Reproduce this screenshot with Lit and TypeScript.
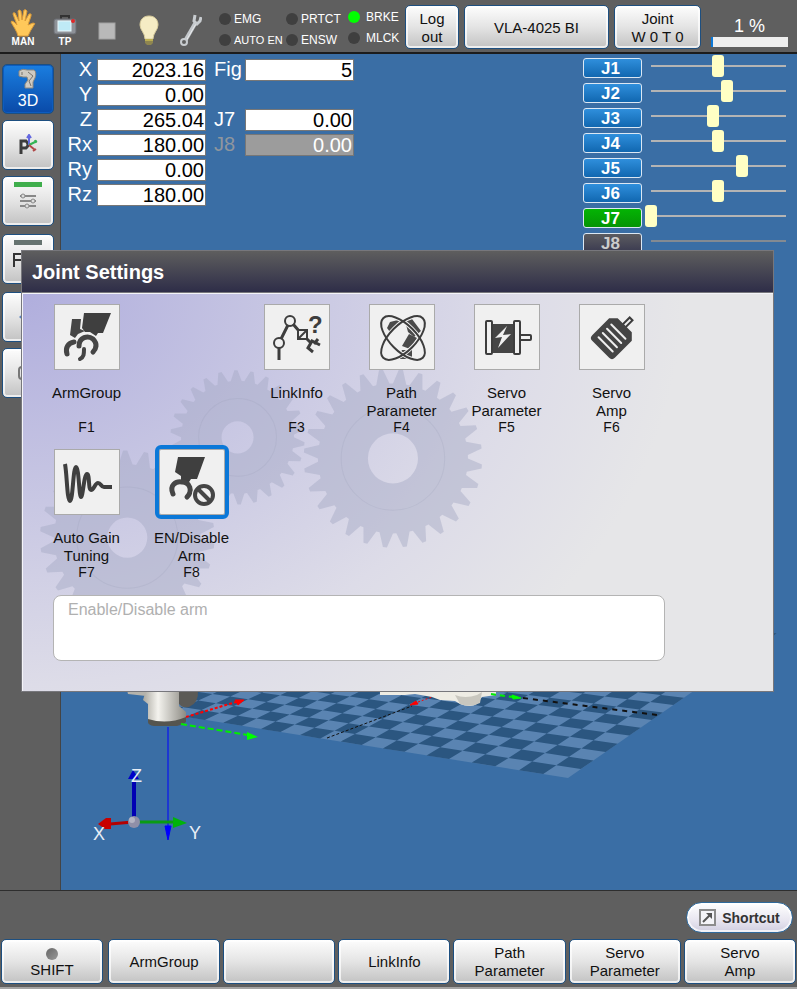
import { LitElement, html, css, svg, nothing } from "lit";
import { customElement, property } from "lit/decorators.js";
import { classMap } from "lit/directives/class-map.js";

const face = css`
  button {
    font: 15px/18px "Liberation Sans", Arial, sans-serif;
    color: #111;
    padding: 0;
    border: 1px solid #1d4f80;
    border-radius: 5px;
    background: linear-gradient(#fdfdfd, #e4e4e4 50%, #c2c2c2);
    box-shadow: inset 0 0 0 2px rgba(255, 255, 255, 0.7);
  }
`;

/* Icons of the function tiles, each on a 66 x 66 canvas */
const icons: Record<string, unknown> = {
  armGroup: svg`
    <path d="M18 15H27L26 25L31 27L24 30L21 34L16 31Z" fill="#454545"/>
    <path d="M30 9H57L49 29H44L42 32L36 28H31L28 24Z" fill="#3f3f3f"/>
    <path d="M13 50C11 44 14 39 20 38" fill="none" stroke="#454545" stroke-width="5" stroke-linecap="round"/>
    <path d="M25 42C25 33 34 31 39 35C44 40 42 45 39 48" fill="none" stroke="#454545" stroke-width="5" stroke-linecap="round"/>
    <path d="M26 55C30 53 30 50 30 45" fill="none" stroke="#454545" stroke-width="4" stroke-linecap="round"/>`,
  linkInfo: svg`
    <g fill="none" stroke="#3d3d3d" stroke-width="3">
      <path d="M15 44V56M17 35L24 21M29 20L35 27M43 35L47 39"/>
      <circle cx="15" cy="39" r="5" stroke-width="2"/>
      <circle cx="26" cy="17" r="5" stroke-width="2"/>
      <rect x="34" y="26" width="9" height="9" stroke-width="2"/>
      <path d="M34 35L43 26" stroke-width="2"/>
      <path d="M49 48L44 44L48 37L56 41M50 40L54 35"/>
    </g>
    <text x="44" y="29" font-size="24" font-weight="700" fill="#3d3d3d">?</text>`,
  path: svg`
    <path d="M21 18L33 15L35 18L23 25L21 28L18 24Z" fill="#4a4a4a"/>
    <path d="M36 17L43 15L52 27L45 33L39 28Z" fill="#4a4a4a"/>
    <path d="M40 30L48 34L41 45L33 42Z" fill="#4a4a4a"/>
    <path d="M33 46H43V55H31V50Z" fill="#4a4a4a"/>
    <g fill="none" stroke="#f0f0f0" stroke-width="4">
      <ellipse cx="34" cy="34" rx="28" ry="13" transform="rotate(45 34 34)"/>
      <ellipse cx="34" cy="34" rx="28" ry="13" transform="rotate(-45 34 34)"/>
    </g>
    <g fill="none" stroke="#3d3d3d" stroke-width="2">
      <ellipse cx="34" cy="34" rx="28" ry="13" transform="rotate(45 34 34)"/>
      <ellipse cx="34" cy="34" rx="28" ry="13" transform="rotate(-45 34 34)"/>
    </g>`,
  servo: svg`
    <rect x="18" y="20" width="22" height="29" fill="#454545"/>
    <g fill="#f0f0f0" stroke="#3d3d3d" stroke-width="2">
      <rect x="12" y="17" width="6" height="33" rx="1"/>
      <rect x="40" y="17" width="6" height="33" rx="1"/>
      <rect x="46" y="31" width="11" height="5" rx="1"/>
    </g>
    <path d="M33 22L21 34L28 33L24 44L37 30L29 31Z" fill="#f0f0f0"/>`,
  amp: svg`
    <g transform="rotate(45 33 34)">
      <rect x="31" y="7" width="4" height="10" fill="#f0f0f0" stroke="#3d3d3d" stroke-width="2"/>
      <path d="M23 16H43L49 22V46Q49 50 45 50H21Q17 50 17 46V22Z" fill="#454545"/>
      <path d="M23 25H43M23 31H43M23 37H43M23 43H43" stroke="#f0f0f0" stroke-width="2" stroke-linecap="round"/>
    </g>`,
  gain: svg`
    <path d="M11 15C13 25 13 52 16 52S19 18 22 18S25 48 27 48S30 25 33 25S34 41 37 41S41 34 44 34S47 38 50 38H58"
      fill="none" stroke="#3f3f3f" stroke-width="4" stroke-linejoin="round"/>`,
  disable: svg`
    <path d="M19 8H46L38 30H32L30 33H22V27L16 23Z" fill="#3f3f3f"/>
    <path d="M14 45C10 36 17 32 23 33C31 33 34 42 28 48" fill="none" stroke="#454545" stroke-width="5" stroke-linecap="round"/>
    <circle cx="45" cy="46" r="12" fill="#f0f0f0"/>
    <circle cx="45" cy="46" r="9" fill="none" stroke="#454545" stroke-width="4"/>
    <path d="M39 40L51 52" stroke="#454545" stroke-width="4"/>`,
};

@customElement("function-tile")
export class FunctionTile extends LitElement {
  @property() icon = "";
  @property() label = "";
  @property() key = "";
  @property({ type: Boolean }) selected = false;

  static styles = css`
    :host {
      display: block;
    }
    .tile {
      width: 100%;
      padding: 0;
      border: 0;
      background: none;
      color: #111;
      font: 15px/18px "Liberation Sans", Arial, sans-serif;
      display: flex;
      flex-direction: column;
      align-items: center;
    }
    .icon {
      box-sizing: border-box;
      width: 66px;
      height: 66px;
      border: 1px solid #aaa;
      background: #f0f0f0;
      margin-bottom: 14px;
    }
    .icon svg {
      display: block;
      width: 64px;
      height: 64px;
      font-family: "Liberation Sans", Arial, sans-serif;
    }
    .selected .icon {
      outline: 4px solid #0b78d8;
      border-radius: 2px;
    }
    .label {
      height: 36px;
      white-space: pre-line;
    }
    .key {
      font-size: 14px;
      line-height: 14px;
    }
  `;

  render() {
    return html`<button class=${classMap({ tile: true, selected: this.selected })}>
      <span class="icon"><svg viewBox="1 1 64 64" aria-hidden="true">${icons[this.icon]}</svg></span>
      <span class="label">${this.label}</span>
      <span class="key">${this.key}</span>
    </button>`;
  }
}

function gear(cx: number, cy: number, outer: number, hub: number, teeth: number) {
  const inner = outer * 0.84;
  const pts: string[] = [];
  for (let i = 0; i < teeth; i++) {
    const steps: [number, number][] = [[0, inner], [0.3, outer], [0.5, outer], [0.8, inner]];
    for (const [f, r] of steps) {
      const a = ((i + f) / teeth) * Math.PI * 2;
      pts.push(`${(cx + r * Math.cos(a)).toFixed(1)} ${(cy + r * Math.sin(a)).toFixed(1)}`);
    }
  }
  const hole = `M${cx - hub} ${cy}a${hub} ${hub} 0 1 0 ${hub * 2} 0a${hub} ${hub} 0 1 0 ${-hub * 2} 0Z`;
  return svg`<path d="M${pts.join("L")}Z${hole}" fill-rule="evenodd" class="gear"/>
    <circle cx=${cx} cy=${cy} r=${outer * 0.58} class="ring"/>`;
}

@customElement("joint-dialog")
export class JointDialog extends LitElement {
  static styles = css`
    :host {
      display: block;
      box-sizing: border-box;
      border: 1px solid #77777c;
      background: #e6e6e8;
      font-family: "Liberation Sans", Arial, sans-serif;
    }
    .title {
      margin: 0;
      padding: 1px 10px 0;
      font-size: 20px;
      line-height: 40px;
      color: #fff;
      background: linear-gradient(#5e5e5e, #2e2d48);
      border-bottom: 1px solid #77777c;
    }
    .body {
      position: relative;
      padding: 10px 11px 30px;
      border: 1px solid #f4f4f8;
      border-width: 1px 0 0 1px;
      background: radial-gradient(ellipse 660px 520px at 0 0, #b0aedd, #c8c7e3 40%, #dddce8 75%, #e6e6e8);
    }
    .backdrop {
      position: absolute;
      inset: 0;
      width: 100%;
      height: 100%;
    }
    .gear {
      fill: #a4a9c4;
      opacity: 0.45;
    }
    .ring {
      fill: none;
      stroke: #9499b4;
      stroke-width: 1;
      opacity: 0.2;
    }
    .tiles {
      position: relative;
      display: grid;
      grid-template-columns: repeat(6, 105px);
      gap: 15px 0;
    }
    .f1 { grid-column: 1; }
    .f3 { grid-column: 3; }
    .f7 { grid-column: 1; }
    .help {
      position: relative;
      box-sizing: border-box;
      display: block;
      width: calc(100% - 116px);
      height: 66px;
      margin: 16px 0 0 19px;
      padding: 5px 14px;
      border: 1px solid #b4b4b4;
      border-radius: 8px;
      background: #fff;
      resize: none;
      font: 16px/18px "Liberation Sans", Arial, sans-serif;
      color: #b0b0b0;
    }
  `;

  private tiles = [
    { icon: "armGroup", label: "ArmGroup", key: "F1", cls: "f1" },
    { icon: "linkInfo", label: "LinkInfo", key: "F3", cls: "f3" },
    { icon: "path", label: "Path\nParameter", key: "F4", cls: "" },
    { icon: "servo", label: "Servo\nParameter", key: "F5", cls: "" },
    { icon: "amp", label: "Servo\nAmp", key: "F6", cls: "" },
    { icon: "gain", label: "Auto Gain\nTuning", key: "F7", cls: "f7" },
    { icon: "disable", label: "EN/Disable\nArm", key: "F8", cls: "", selected: true },
  ];

  render() {
    return html`
      <h1 class="title">Joint Settings</h1>
      <div class="body">
        <svg class="backdrop" viewBox="23 294 749 396" preserveAspectRatio="xMinYMin slice" aria-hidden="true">
          ${gear(237, 437, 67, 16, 26)} ${gear(392, 458, 89, 25, 28)} ${gear(127, 537, 87, 20, 26)}
        </svg>
        <div class="tiles">
          ${this.tiles.map(
            (t) => html`<function-tile class=${t.cls} .icon=${t.icon} .label=${t.label} .key=${t.key} .selected=${!!t.selected}></function-tile>`
          )}
        </div>
        <textarea class="help" readonly aria-label="Function description" .value=${"Enable/Disable arm"}></textarea>
      </div>
    `;
  }
}

/* Floor tiles projected in perspective from the front corner */
function floor() {
  const g = 0.01;
  const h = 0.0122;
  const x0 = 568;
  const y0 = 778;
  const project = (u: number, v: number) => {
    const w = 1 + g * u + h * v;
    const x = (x0 + (x0 * g - 25) * u + (x0 * h + 13) * v) / w;
    const y = (y0 + (y0 * g - 4) * u + (y0 * h - 9) * v) / w;
    return `${x.toFixed(1)} ${y.toFixed(1)}`;
  };
  let dark = "";
  const n = 20;
  for (let u = 0; u < n; u++) {
    for (let v = 0; v < n; v++) {
      if ((u + v) % 2) {
        dark += `M${project(u, v)}L${project(u + 1, v)}L${project(u + 1, v + 1)}L${project(u, v + 1)}Z`;
      }
    }
  }
  return svg`<path fill="#5a84b2" d="M${project(0, 0)}L${project(n, 0)}L${project(n, n)}L${project(0, n)}Z"/>
    <path fill="#2b5680" d=${dark}/>`;
}

@customElement("robot-scene")
export class RobotScene extends LitElement {
  static styles = css`
    :host {
      display: block;
    }
    svg {
      display: block;
      width: 100%;
      height: 100%;
    }
    .axis {
      font: 18px "Liberation Sans", Arial, sans-serif;
      fill: #e8eef6;
    }
  `;
  render() {
    return html`<svg viewBox="61 54 736 836" preserveAspectRatio="xMinYMin slice" role="img" aria-label="3D robot view">
      <defs>
        <linearGradient id="metal">
          <stop offset="0" stop-color="#a9a79f" />
          <stop offset=".35" stop-color="#f4f3ee" />
          <stop offset="1" stop-color="#8d8b84" />
        </linearGradient>
      </defs>
      ${floor()}
      <path d="M176 690H198Q199 703 189 707Q181 709 176 700Z" fill="#5b5a56" />
      <path d="M127 690H155V698L146 696L128 694Z" fill="#b5b3ac" />
      <path d="M146 690H179V706L186 712V720Q167 728 148 721V704L143 700Z" fill="url(#metal)" />
      <path d="M148 719Q167 725 186 717V722Q184 724 177 726H154Q148 725 148 722Z" fill="#55554f" />
      <path d="M380 690V695H405L415 694L432 697L440 700L455 701L460 704Q470 708 477 704L482 697L496 695V690Z" fill="#eeece4" />
      <path d="M455 695Q465 699 477 695L482 692L480 703Q470 708 460 704Z" fill="#c9c7bf" />
      <path d="M186 717L236 702" stroke="#f00" stroke-width="2" stroke-dasharray="3 2" />
      <path d="M235 700L244 700L238 705Z" fill="#f00" stroke="#f00" />
      <path d="M181 724L248 735" stroke="#0e0" stroke-width="2" stroke-dasharray="6 3" />
      <path d="M247 732L258 737L247 740Z" fill="#0f0" />
      <path d="M327 738L412 706" stroke="#111" stroke-dasharray="3 2" />
      <path d="M418 702L432 697" stroke="#f00" stroke-dasharray="2 2" />
      <path d="M410 705L416 701L418 704Z" fill="#f00" stroke="#f00" />
      <path d="M491 694L513 697" stroke="#0e0" stroke-width="2" stroke-dasharray="5 4" />
      <path d="M512 695L521 698L513 699Z" fill="#0f0" stroke="#0f0" />
      <path d="M523 698L657 715" stroke="#111" stroke-width="2" stroke-dasharray="5 5" />
      <path d="M168 727V826" stroke="#00f" />
      <path d="M165 826H171L168 840Z" fill="#00f" stroke="#00f" />
      <path d="M134 822V782" stroke="#0000b4" stroke-width="4" />
      <path d="M128 779L133 770L139 779Z" fill="#0000c8" />
      <path d="M134 822H173" stroke="#0a9c14" stroke-width="3" />
      <path d="M173 817L187 823L173 828Z" fill="#00b40a" />
      <path d="M133 822L110 824" stroke="#b40000" stroke-width="3" />
      <path d="M98 824L106 818H111V829H105Z" fill="#c80000" />
      <circle cx="134" cy="822" r="6" fill="#8f8fa8" />
      <circle cx="132" cy="820" r="3" fill="#b4b4c4" />
      <text class="axis" x="131" y="782">Z</text>
      <text class="axis" x="93" y="840">X</text>
      <text class="axis" x="189" y="839">Y</text>
    </svg>`;
  }
}

@customElement("joint-panel")
export class JointPanel extends LitElement {
  static styles = css`
    :host {
      display: block;
    }
    .row {
      display: flex;
      align-items: flex-start;
      gap: 3px;
      height: 25px;
    }
    .name {
      box-sizing: border-box;
      width: 59px;
      height: 20px;
      margin-top: 3px;
      padding: 0 4px 0 0;
      font: bold 17px/17px "Liberation Sans", Arial, sans-serif;
      color: #fff;
      border: 1px solid #dce8f4;
      border-radius: 3px;
      background: linear-gradient(#2f8fdc, #1167b0);
    }
    .active { background: linear-gradient(#04b404, #059405); }
    .off {
      background: linear-gradient(#5c5c60, #3a3a50);
      color: #ccc;
    }
    .slider {
      appearance: none;
      width: 146px;
      height: 22px;
      margin: 0;
      background: linear-gradient(#b4b4b4, #b4b4b4) center / calc(100% - 11px) 2px no-repeat;
    }
    .slider:disabled {
      background-image: linear-gradient(#838a92, #838a92);
    }
    .slider::-webkit-slider-thumb {
      appearance: none;
      width: 12px;
      height: 22px;
      border-radius: 3px;
      background: #ffffc4;
    }
    .slider:disabled::-webkit-slider-thumb { opacity: 0; }
  `;
  private joints = [50, 57, 46, 50, 68, 50, 0, null];
  render() {
    return this.joints.map((v, i) => {
      const name = `J${i + 1}`;
      return html`<div class="row">
        <button class=${classMap({ name: true, active: i === 6, off: v === null })}>${name}</button>
        <input class="slider" type="range" aria-label=${name} .value=${String(v ?? 0)} ?disabled=${v === null} />
      </div>`;
    });
  }
}

@customElement("position-panel")
export class PositionPanel extends LitElement {
  static styles = css`
    :host {
      display: grid;
      grid-template-columns: 31px 109px 39px 109px;
      grid-auto-rows: 22px;
      gap: 3px 0;
      font: 20px/20px "Liberation Sans", Arial, sans-serif;
      color: #fff;
    }
    .left { grid-column: 1; text-align: right; padding-right: 5px; }
    .right { grid-column: 3; padding-left: 8px; }
    .value {
      box-sizing: border-box;
      width: 100%;
      min-width: 0;
      height: 22px;
      margin: 0;
      padding: 0 1px;
      border: 1px solid #777;
      background: #fff;
      font: inherit;
      color: #000;
      text-align: right;
    }
    .dim { color: #8f969e; }
    .value.dim { background: #9c9c9c; color: #fff; }
  `;
  private rows: [string, string, string?, string?][] = [
    ["X", "2023.16", "Fig", "5"],
    ["Y", "0.00"],
    ["Z", "265.04", "J7", "0.00"],
    ["Rx", "180.00", "J8", "0.00"],
    ["Ry", "0.00"],
    ["Rz", "180.00"],
  ];
  render() {
    return this.rows.map(
      ([a, av, b, bv]) => html`<label class="left" for=${a}>${a}</label><input class="value" id=${a} readonly .value=${av} />
        ${b
          ? html`<label class=${classMap({ right: true, dim: b === "J8" })} for=${b}>${b}</label
              ><input class=${classMap({ value: true, dim: b === "J8" })} id=${b} readonly .value=${bv ?? ""} />`
          : nothing}`
    );
  }
}

@customElement("status-bar")
export class StatusBar extends LitElement {
  static styles = [
    face,
    css`
      :host {
        box-sizing: border-box;
        height: 54px;
        display: flex;
        align-items: center;
        padding: 2px 9px 0 2px;
        background: #5f5f5f;
        border-bottom: 2px solid #1c1c1c;
        color: #fff;
        font-family: "Liberation Sans", Arial, sans-serif;
      }
      .tools {
        display: grid;
        grid-template-columns: repeat(5, 42px);
        align-items: end;
      }
      button.tool {
        height: 40px;
        border: 0;
        background: none;
        box-shadow: none;
        color: #fff;
        font-size: 10px;
        line-height: 10px;
        font-weight: bold;
        display: flex;
        flex-direction: column;
        align-items: center;
        justify-content: flex-end;
      }
      .leds {
        display: grid;
        grid-template-columns: 67px 59px;
        row-gap: 5px;
        padding: 4px 0 0 7px;
      }
      .leds.last {
        grid-template-columns: 57px;
        padding: 0 0 0 3px;
      }
      .led {
        display: flex;
        align-items: center;
        gap: 3px;
        height: 16px;
        font-size: 12px;
        white-space: nowrap;
      }
      .last .led { gap: 6px; }
      .led.small { font-size: 11px; }
      .led::before {
        content: "";
        width: 12px;
        height: 12px;
        border-radius: 50%;
        background: #3f3f3f;
      }
      .led.on::before { background: #0f0; }
      .actions {
        flex: 1;
        display: grid;
        grid-template-columns: 54px 1fr 87px;
        grid-auto-rows: 44px;
        gap: 5px;
        margin-right: 10px;
      }
      .actions button { padding-top: 2px; }
      .speed {
        width: 77px;
        text-align: center;
        font-size: 18px;
        line-height: 20px;
        padding-top: 8px;
      }
      .bar {
        display: block;
        height: 10px;
        margin-top: 1px;
        background: #eee;
      }
      .fill { display: block; height: 10px; min-width: 2px; background: #0b78d8; }
    `,
  ];
  render() {
    return html`
      <div class="tools">
        <button class="tool">
          <svg width="26" height="28" viewBox="0 0 26 28" aria-hidden="true">
            <path d="M8 27C7 22 3 17 1 13Q1 11 4 13L7 16L3 5Q3 3 5 4L9 12L8 2Q9 0 11 2L12 11L14 1Q16 0 17 2L15 12L19 5Q22 4 21 7L18 16L23 14Q26 14 24 16Q20 22 18 27Z" fill="#ffc85a" stroke="#d99a3a" />
          </svg>MAN</button>
        <button class="tool">
          <svg width="24" height="22" viewBox="0 0 24 22" aria-hidden="true">
            <path d="M8 4V1H16V4" fill="none" stroke="#333" stroke-width="2" />
            <rect x="1" y="4" width="22" height="15" rx="2" fill="#8e9298" stroke="#6a6d72" />
            <rect x="5" y="6" width="13" height="10" fill="#bfeaf6" stroke="#e8f6fa" />
            <circle cx="20" cy="6" r="2" fill="#e02828" />
          </svg>TP</button>
        <button class="tool" aria-label="Stop">
          <svg width="18" height="25" viewBox="0 0 18 25" aria-hidden="true"><rect x="1" y="1" width="16" height="16" fill="#b9b9b9" stroke="#a2a2a2" /></svg>
        </button>
        <button class="tool" aria-label="Lamp">
          <svg width="20" height="32" viewBox="0 0 20 32" aria-hidden="true">
            <path d="M10 1C4 1 1 5 1 10C1 15 6 18 6 24H14C14 18 19 15 19 10C19 5 16 1 10 1Z" fill="#f5ecc4" stroke="#d8cc9c" />
            <path d="M6 24H14V28L12 30H8L6 28Z" fill="#8f8650" />
            <path d="M6 25H14" stroke="#e8d858" />
          </svg>
        </button>
        <button class="tool" aria-label="Maintenance">
          <svg width="22" height="34" viewBox="0 0 22 34" aria-hidden="true">
            <path d="M5 28L16 9" stroke="#c4c8cc" stroke-width="4" />
            <path d="M6 28L17 9" stroke="#e8eaec" />
            <path d="M15 2L14 8L17 11L20 8L21 4" fill="none" stroke="#c8ccd0" stroke-width="3" />
            <circle cx="4" cy="29" r="3" fill="#5f5f5f" stroke="#c8ccd0" stroke-width="2" />
          </svg>
        </button>
      </div>
      <div class="leds">
        <span class="led">EMG</span><span class="led">PRTCT</span>
        <span class="led small">AUTO EN</span><span class="led">ENSW</span>
      </div>
      <div class="leds last"><span class="led on">BRKE</span><span class="led">MLCK</span></div>
      <div class="actions">
        <button>Log<br />out</button>
        <button>VLA-4025 BI</button>
        <button>Joint<br />W 0 T 0</button>
      </div>
      <div class="speed">1 %<span class="bar"><span class="fill" style="width:1%"></span></span></div>
    `;
  }
}

@customElement("side-bar")
export class SideBar extends LitElement {
  static styles = [
    face,
    css`
      :host {
        box-sizing: border-box;
        width: 61px;
        display: flex;
        flex-direction: column;
        gap: 6px;
        padding: 10px 0 0 2px;
        background: #5f5f5f;
        border-right: 1px solid #444;
      }
      button {
        width: 52px;
        height: 50px;
        display: flex;
        flex-direction: column;
        align-items: center;
        justify-content: center;
      }
      svg { display: block; }
      button.current {
        background: linear-gradient(#1a7ee0, #0a4aa8);
        color: #fff;
        font-size: 16px;
        box-shadow: inset 0 0 0 1px #0d5cc0;
      }
      .group { margin-top: 2px; }
    `,
  ];
  render() {
    return html`
      <button class="current">
        <svg width="20" height="24" viewBox="0 0 20 24" aria-hidden="true">
          <path d="M1 3Q5 0 9 2H16Q19 4 17 10L15 14V20H7V16L10 12L9 9L5 9L1 8Z" fill="#cfcac2" stroke="#8c8880" />
          <path d="M10 4L15 8L11 13L13 18M4 4L4 7" fill="none" stroke="#77736c" />
        </svg>3D
      </button>
      <button aria-label="Position">
        <svg width="20" height="22" viewBox="0 0 20 22" aria-hidden="true">
          <path d="M3 20V7H8Q12 11 8 14H3" fill="none" stroke="#3c3c3c" stroke-width="3" />
          <path d="M11 11V3M9 4L11 1L13 4" fill="none" stroke="#6468e0" stroke-width="2" />
          <path d="M11 11L19 7M17 6L18 9" stroke="#34b454" stroke-width="2" />
          <path d="M11 11L17 16M15 17L18 15" stroke="#b04848" stroke-width="2" />
        </svg>
      </button>
      <button aria-label="Parameters">
        <svg width="28" height="38" viewBox="0 0 28 38" aria-hidden="true">
          <rect width="28" height="5" fill="#3fae4c" />
          <g fill="#ddd" stroke="#888">
            <path d="M6 14H22M6 19H22M6 24H22" stroke-width="2" />
            <circle cx="9" cy="14" r="2" /><circle cx="19" cy="19" r="2" /><circle cx="13" cy="24" r="2" />
          </g>
        </svg>
      </button>
      <button class="group" aria-label="Function">
        <svg width="30" height="38" viewBox="0 0 30 38" aria-hidden="true">
          <rect x="1" width="28" height="5" fill="#667370" />
          <path d="M1 27V14H12M1 20H10" fill="none" stroke="#333" stroke-width="2" />
        </svg>
      </button>
      <button class="group" aria-label="Move">
        <svg width="18" height="18" viewBox="0 0 18 18" aria-hidden="true"><path d="M0 9L6 4V14Z" fill="#5a82c0" /></svg>
      </button>
      <button aria-label="Device">
        <svg width="20" height="18" viewBox="0 0 20 18" aria-hidden="true"><rect x="1" y="3" width="18" height="12" rx="3" fill="none" stroke="#777" stroke-width="2" /></svg>
      </button>
    `;
  }
}

@customElement("function-bar")
export class FunctionBar extends LitElement {
  static styles = [
    face,
    css`
      :host {
        display: flex;
        flex-direction: column;
        align-items: stretch;
        background: #5f5f5f;
        border-top: 1px solid #2e2e2e;
        padding-top: 11px;
      }
      button.shortcut {
        align-self: flex-end;
        display: flex;
        align-items: center;
        justify-content: center;
        gap: 6px;
        width: 107px;
        height: 31px;
        margin-right: 4px;
        border-radius: 16px;
        border-color: #2f6a9c;
        background: linear-gradient(#fff, #e8e6f0 60%, #d0cee0);
        color: #333;
        font-size: 14px;
        font-weight: bold;
      }
      .keys {
        display: grid;
        grid-template-columns: 104px repeat(6, 1fr);
        grid-auto-rows: 45px;
        gap: 3px;
        padding: 6px 1px 3px;
        border-bottom: 2px solid #a4a4a4;
      }
      .keys button { white-space: pre-line; }
      .shift { margin-right: 2px; }
      .dot {
        display: block;
        width: 12px;
        height: 12px;
        margin: 4px auto 1px;
        border-radius: 50%;
        background: linear-gradient(135deg, #666, #999);
      }
    `,
  ];
  private keys = ["ArmGroup", "", "LinkInfo", "Path\nParameter", "Servo\nParameter", "Servo\nAmp"];
  render() {
    return html`
      <button class="shortcut">
        <svg width="17" height="17" viewBox="0 0 17 17" aria-hidden="true">
          <rect x="1" y="1" width="15" height="15" fill="#f4f4f8" stroke="#8c8c8c" stroke-width="2" />
          <path d="M4 13L11 6" stroke="#555" stroke-width="2" /><path d="M7 4H13V10Z" fill="#555" />
        </svg>Shortcut</button>
      <div class="keys">
        <button class="shift"><span class="dot"></span>SHIFT</button>
        ${this.keys.map((k) => html`<button>${k}</button>`)}
      </div>
    `;
  }
}

@customElement("app-root")
export class AppRoot extends LitElement {
  static styles = css`
    :host {
      position: relative;
      display: flex;
      flex-direction: column;
      min-height: 100vh;
      background: #5f5f5f;
    }
    .main {
      flex: 1;
      display: flex;
    }
    .view {
      position: relative;
      flex: 1;
      display: flex;
      justify-content: space-between;
      align-items: flex-start;
      padding: 1px 6px 0 5px;
      background: #3a6ea5;
    }
    .scene {
      position: absolute;
      inset: 0;
    }
    .position {
      position: relative;
      margin-top: 4px;
    }
    .joints { position: relative; }
    .dialog {
      position: absolute;
      top: 250px;
      left: 21px;
      right: 23px;
    }
  `;
  render() {
    return html`
      <status-bar></status-bar>
      <div class="main">
        <side-bar></side-bar>
        <main class="view">
          <robot-scene class="scene"></robot-scene>
          <position-panel class="position"></position-panel>
          <joint-panel class="joints"></joint-panel>
        </main>
      </div>
      <function-bar></function-bar>
      <joint-dialog class="dialog" role="dialog" aria-label="Joint Settings"></joint-dialog>
    `;
  }
}
